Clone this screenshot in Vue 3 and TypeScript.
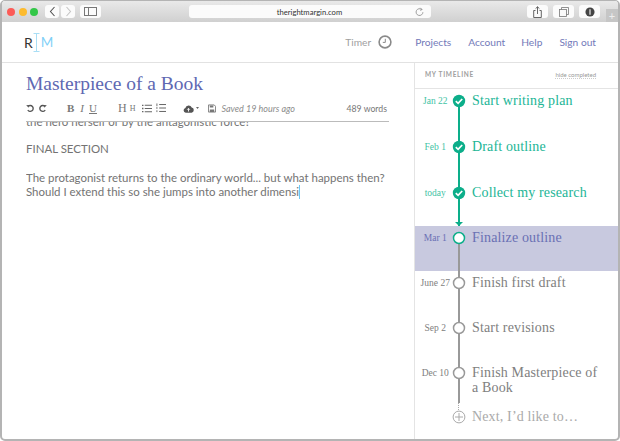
<script setup lang="ts">
interface Item { date: string; title: string; state: 'done' | 'current' | 'todo' }
const items: Item[] = [
  { date: 'Jan 22', title: 'Start writing plan', state: 'done' },
  { date: 'Feb 1', title: 'Draft outline', state: 'done' },
  { date: 'today', title: 'Collect my research', state: 'done' },
  { date: 'Mar 1', title: 'Finalize outline', state: 'current' },
  { date: 'June 27', title: 'Finish first draft', state: 'todo' },
  { date: 'Sep 2', title: 'Start revisions', state: 'todo' },
  { date: 'Dec 10', title: 'Finish Masterpiece of a Book', state: 'todo' },
]
</script>

<template>
  <div class="window">
    <div class="chrome">
      <div class="lights">
        <span class="light red"></span><span class="light yellow"></span><span class="light green"></span>
      </div>
      <div class="btn-pair">
        <span class="cbtn nav"><svg width="7" height="11" viewBox="0 0 7 11"><path d="M5.5 1 1.5 5.5 5.5 10" fill="none" stroke="#555" stroke-width="1.1"/></svg></span>
        <span class="cbtn nav"><svg width="7" height="11" viewBox="0 0 7 11"><path d="M1.5 1 5.5 5.5 1.5 10" fill="none" stroke="#c4c4c4" stroke-width="1.1"/></svg></span>
      </div>
      <span class="cbtn side"><svg width="13" height="9" viewBox="0 0 13 9"><rect x=".5" y=".5" width="12" height="8" fill="none" stroke="#777"/><path d="M4.5 1v7" stroke="#777"/></svg></span>
      <div class="url">
        <span class="url-text">therightmargin.com</span>
        <svg class="reload" width="9" height="10" viewBox="0 0 9 10"><path d="M6.8 2.6A3.4 3.4 0 1 0 7.9 5.2" fill="none" stroke="#888" stroke-width=".8"/><path d="M5.4 .8 7.2 2.6 5 3.4" fill="none" stroke="#888" stroke-width=".7"/></svg>
      </div>
      <div class="right-btns">
        <span class="cbtn"><svg width="9" height="12" viewBox="0 0 9 12"><path d="M2.5 4.5H.7v7h7.6v-7H6.5M4.5 8V.8M2.6 2.6 4.5.8l1.900 1.800" fill="none" stroke="#555" stroke-width=".9"/></svg></span>
        <span class="cbtn"><svg width="10" height="10" viewBox="0 0 10 10"><rect x=".5" y="2.5" width="7" height="7" fill="none" stroke="#777" stroke-width=".8"/><path d="M2.5 2.5v-2h7v7h-2" fill="none" stroke="#777" stroke-width=".8"/></svg></span>
        <span class="cbtn"><svg width="10" height="10" viewBox="0 0 11 11"><circle cx="5.5" cy="5.5" r="5" fill="#444"/><path d="M5.5 2.600v5.800" stroke="#ccc" stroke-width="1.600"/></svg></span>
      </div>
      <span class="newtab">+</span>
    </div>

    <header class="topbar">
      <div class="logo">
        <span class="logo-r">R</span>
        <svg class="logo-cursor" width="7" height="19" viewBox="0 0 7 19"><path d="M.5.5h6M3.5.5v18M.5 18.5h6" fill="none" stroke="#a9def5"/></svg>
        <span class="logo-m">M</span>
      </div>
      <nav class="nav-links">
        <span class="timer">Timer</span>
        <svg class="clock" width="14" height="14" viewBox="0 0 14 14"><circle cx="7" cy="7" r="5.900" fill="none" stroke="#8a8a8a" stroke-width="1.600"/><path d="M7.300 3.800v3.600H4.800" fill="none" stroke="#8a8a8a" stroke-width="1"/></svg>
        <a class="link l-projects">Projects</a>
        <a class="link l-account">Account</a>
        <a class="link l-help">Help</a>
        <a class="link">Sign out</a>
      </nav>
    </header>

    <main class="body">
      <section class="editor">
        <h1 class="doc-title">Masterpiece of a Book</h1>
        <div class="toolbar">
          <svg class="ti" width="9" height="9" viewBox="0 0 11 10"><path d="M2.600 2.400A3.600 3.600 0 1 1 2.200 7" fill="none" stroke="#555" stroke-width="1.700"/><path d="M.2 1 3.600.6 3.400 4Z" fill="#555"/></svg>
          <svg class="ti redo" width="9" height="9" viewBox="0 0 11 10"><path d="M8.400 2.400A3.600 3.600 0 1 0 8.800 7" fill="none" stroke="#555" stroke-width="1.700"/><path d="M10.800 1 7.400.6 7.600 4Z" fill="#555"/></svg>
          <span class="tf b">B</span>
          <span class="tf i">I</span>
          <span class="tf u">U</span>
          <span class="tf h1">H</span>
          <span class="tf h2">H</span>
          <svg class="ti ul" width="10" height="9" viewBox="0 0 11 9"><path d="M3 1h8M3 4.500h8M3 8h8" stroke="#666" stroke-width="1.200"/><path d="M0 1h1.600M0 4.500h1.600M0 8h1.600" stroke="#666" stroke-width="1.400"/></svg>
          <svg class="ti ol" width="10" height="10" viewBox="0 0 11 10"><path d="M3.500 1.200h7.500M3.500 5h7.500M3.500 8.800h7.500" stroke="#666" stroke-width="1.100"/><path d="M1 0v3M1 4v2M1 7.500v2" stroke="#666"/></svg>
          <svg class="cloud" width="11" height="9" viewBox="0 0 12 9"><path d="M3 9A2.600 2.600 0 0 1 2.600 3.900 3.600 3.600 0 0 1 9.500 3.500 2.800 2.800 0 0 1 9.500 9Z" fill="#555"/><path d="M6 7.800V4.600M4.600 5.800 6 4.300l1.400 1.500" fill="none" stroke="#fff"/></svg>
          <svg class="caret" width="3" height="2" viewBox="0 0 5 3"><path d="M0 0h5L2.500 3Z" fill="#666"/></svg>
          <svg class="save" width="8" height="9" viewBox="0 0 9 9"><path d="M.5.5h6.500l1.500 1.500v6.500h-8Z" fill="none" stroke="#777"/><path d="M2 1h4v2.500H2ZM2 5.500h5v3H2Z" fill="#777"/></svg>
          <span class="saved">Saved 19 hours ago</span>
          <span class="words">489 words</span>
        </div>
        <div class="text">
          <p class="clipped">the hero herself or by the antagonistic force?</p>
          <p class="section">FINAL SECTION</p>
          <p class="para">The protagonist returns to the ordinary world... but what happens then?<br>Should I extend this so she jumps into another dimensi<span class="cursor"></span></p>
        </div>
      </section>

      <aside class="panel">
        <div class="panel-head">
          <span class="panel-title">MY TIMELINE</span>
          <span class="hide">hide completed</span>
        </div>
        <ul class="timeline">
          <li v-for="it in items" :key="it.title" class="row" :class="it.state">
            <span class="date">{{ it.date }}</span>
            <span class="node">
              <svg v-if="it.state === 'done'" width="14" height="14" viewBox="0 0 14 14"><circle cx="7" cy="7" r="6.200" fill="#0cae8a"/><path d="M3.800 7.200 6.100 9.400 10.200 5" fill="none" stroke="#fff" stroke-width="1.700"/></svg>
              <svg v-else width="14" height="14" viewBox="0 0 14 14"><circle cx="7" cy="7" r="5.500" fill="#fff" :stroke="it.state === 'current' ? '#0cae8a' : '#999'" stroke-width="1.500"/></svg>
            </span>
            <span class="title">{{ it.title }}</span>
          </li>
          <li class="row add">
            <span class="date"></span>
            <span class="node"><svg width="14" height="14" viewBox="0 0 14 14"><circle cx="7" cy="7" r="5.900" fill="#fff" stroke="#aaa"/><path d="M7 3v8M3 7h8" stroke="#aaa"/></svg></span>
            <span class="title">Next, I’d like to…</span>
          </li>
        </ul>
      </aside>
    </main>
  </div>
</template>

<style>
html, body { margin: 0; background: #fff; }
</style>

<style scoped>
.window {
  box-sizing: border-box;
  width: 620px;
  height: 441px;
  border: 1px solid #b4b4b4;
  border-width: 1px 2px 2px 2px;
  border-radius: 5px;
  overflow: hidden;
  display: flex;
  flex-direction: column;
  background: #fff;
  font-family: Lato, sans-serif;
}
.chrome {
  height: 21px;
  flex: none;
  display: flex;
  align-items: center;
  background: linear-gradient(#e9e9e9, #d0d0d0);
  position: relative;
  padding-left: 5px;
}
.lights { display: flex; gap: 3.500px; }
.light { width: 8px; height: 8px; border-radius: 50%; }
.red { background: #fc5b57; }
.yellow { background: #fdbb2e; }
.green { background: #33c748; }
.btn-pair { display: flex; gap: 2px; margin-left: 7px; }
.cbtn {
  height: 13px;
  background: #fbfbfb;
  border-radius: 3px;
  display: flex;
  align-items: center;
  justify-content: center;
}
.nav { width: 14px; }
.side { width: 21px; margin-left: 5px; }
.url {
  margin-left: 88px;
  width: 242px;
  height: 13px;
  background: #fbfbfb;
  border-radius: 3px;
  position: relative;
  display: flex;
  align-items: center;
  justify-content: center;
  font-size: 7.650px;
  color: #333;
}
.url-text { margin-left: -1px; }
.reload { position: absolute; right: 7px; top: 2px; }
.right-btns { display: flex; gap: 5px; margin-left: 96px; }
.right-btns .cbtn { width: 21px; }
.newtab {
  position: absolute;
  right: 0;
  bottom: 0;
  width: 12px;
  height: 13px;
  background: #c6c6c6;
  color: #eee;
  font-size: 11px;
  line-height: 13px;
  text-align: center;
}
.topbar {
  height: 41px;
  flex: none;
  box-sizing: border-box;
  border-bottom: 1px solid #e2e2e2;
  display: flex;
  align-items: center;
  justify-content: space-between;
  padding: 0 22px 0 22px;
}
.logo { display: flex; align-items: center; font-size: 14px; }
.logo-r { color: #333; }
.logo-m { color: #7fd0f7; margin-left: 1px; font-size: 13.500px; }
.nav-links { display: flex; align-items: center; font-size: 10.200px; }
.timer { color: #a0a0a0; margin-right: 7px; }
.clock { margin-right: 23px; }
.link { color: #737ab9; }
.l-projects { margin-right: 17px; }
.l-account { margin-right: 16px; }
.l-help { margin-right: 17px; }
.body { flex: 1; display: flex; min-height: 0; }
.editor {
  width: 413px;
  flex: none;
  box-sizing: border-box;
  padding: 8px 25px 0 24px;
  border-right: 1px solid #e4e4e4;
  overflow: hidden;
}
.doc-title {
  margin: 0;
  font-family: "Liberation Serif", serif;
  font-weight: 400;
  font-size: 19.500px;
  line-height: 26px;
  color: #6068b2;
}
.toolbar {
  display: flex;
  align-items: center;
  height: 22px;
  padding-bottom: 2px;
  border-bottom: 1px solid #bbb;
}
.ti { flex: none; }
.redo { margin-left: 3px; }
.tf { font-family: "Liberation Serif", serif; color: #777; font-size: 11px; }
.b { margin-left: 20px; font-weight: 700; }
.i { margin-left: 6px; font-style: italic; }
.u { margin-left: 5px; text-decoration: underline; }
.h1 { margin-left: 21px; font-size: 12px; }
.h2 { margin-left: 3px; font-size: 8px; }
.ul { margin-left: 7px; }
.ol { margin-left: 4px; }
.cloud { margin-left: 17px; }
.caret { margin-left: 2px; }
.save { margin-left: 9px; }
.saved { margin-left: 5px; font-size: 9px; font-style: italic; color: #8c8c8c; }
.words { margin-left: auto; margin-right: 2px; font-size: 8.700px; color: #777; }
.text { height: 320px; overflow: hidden; font-size: 11.460px; line-height: 14px; color: #737373; }
.text p { margin: 0; }
.clipped { margin-top: -7px !important; }
.section { margin-top: 13px !important; }
.para { margin-top: 15px !important; }
.cursor {
  display: inline-block;
  width: 1px;
  height: 14px;
  background: #6cc8f5;
  vertical-align: -3px;
}
.panel { flex: 1; min-width: 0; }
.panel-head {
  height: 26px;
  box-sizing: border-box;
  border-bottom: 1px solid #e4e4e4;
  display: flex;
  align-items: center;
  justify-content: space-between;
  padding: 0 22px 2px 10px;
}
.panel-title { font-size: 6.500px; letter-spacing: .7px; color: #a0a0a0; font-weight: 700; }
.hide { font-size: 6px; color: #999; border-bottom: 1px dotted #ccc; }
.timeline { list-style: none; margin: 0; padding: 0; }
.row {
  position: relative;
  display: flex;
  align-items: flex-start;
  box-sizing: border-box;
  height: 45px;
  padding-top: 4px;
  font-family: "Liberation Serif", serif;
  color: #808080;
}
.row:nth-child(1), .row:nth-child(2) { height: 46px; }
.row:nth-child(7) { height: 44px; }
.row.add { height: 30px; color: #aaa; }
.row::after {
  content: "";
  position: absolute;
  left: 43px;
  top: 14px;
  bottom: -14px;
  width: 1.500px;
  background: #999;
}
.row.done::after { background: #0cae8a; }
.row.add::after {
  top: -2px;
  bottom: auto;
  width: 0;
  height: 7px;
  background: none;
  border-left: 1.500px dotted #aaa;
}
.row:nth-child(3)::before {
  content: "";
  position: absolute;
  left: 40px;
  bottom: 0;
  border: 4px solid transparent;
  border-top: 4px solid #0cae8a;
  border-bottom: 0;
  z-index: 2;
}
.row:nth-child(7)::after { bottom: 2px; }
.row.current { background: #c8c9df; color: #6a70b4; }
.row.done { color: #22b596; }
.date {
  width: 36.500px;
  margin-left: 2px;
  padding-top: 1px;
  text-align: center;
  font-size: 9.500px;
  line-height: 14px;
  flex: none;
}
.done .date { color: #3fc3a5; }
.node {
  position: relative;
  z-index: 1;
  flex: none;
  width: 14px;
  height: 14px;
  margin: 1px 0 0 -2px;
}
.node svg { display: block; }
.title {
  margin-left: 6.500px;
  font-size: 14px;
  line-height: 15px;
  width: 135px;
  letter-spacing: .15px;
}
</style>
